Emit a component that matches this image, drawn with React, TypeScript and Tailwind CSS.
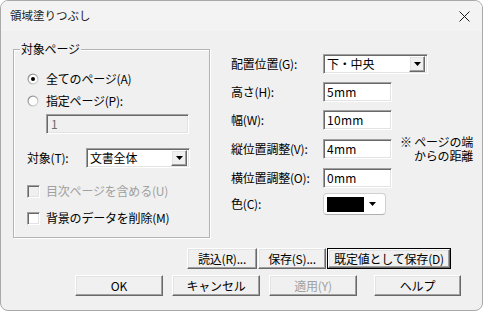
import clsx from "clsx"

const jp = "font-['Noto_Sans_CJK_JP','Noto_Sans_CJK_SC',sans-serif]"
const sunken =
  "border border-t-[#a0a0a0] border-l-[#a0a0a0] border-b-white border-r-white shadow-[inset_1px_1px_0_#696969,inset_-1px_-1px_0_#e3e3e3]"
const raised =
  "border border-t-white border-l-white border-b-[#696969] border-r-[#696969] shadow-[inset_-1px_-1px_0_#a0a0a0,inset_1px_1px_0_#e3e3e3] bg-[#f0f0f0]"

function Radio({ checked }: { checked?: boolean }) {
  return (
    <svg width="12" height="12" viewBox="0 0 12 12" className="shrink-0">
      <defs>
        <linearGradient id="rimGrad" x1="0" y1="0" x2="1" y2="1">
          <stop offset="0" stopColor="#7a7a7a" />
          <stop offset="1" stopColor="#e6e6e6" />
        </linearGradient>
      </defs>
      <circle cx="6" cy="6" r="5.5" fill="url(#rimGrad)" />
      <circle cx="6" cy="6" r="4.3" fill="#fff" />
      {checked && <circle cx="6" cy="6" r="2" fill="#000" />}
    </svg>
  )
}

function Check({ disabled }: { disabled?: boolean }) {
  return <div className={clsx("w-[13px] h-[13px] shrink-0", sunken, disabled ? "bg-[#f0f0f0]" : "bg-white")} />
}

function Arrow() {
  return (
    <svg width="7" height="4" viewBox="0 0 7 4">
      <path d="M0 0h7L3.5 4z" fill="#000" />
    </svg>
  )
}

function Combo({ value, w }: { value: string; w: string }) {
  return (
    <div className={clsx("h-[20px] flex items-center bg-white p-[2px]", sunken, w)}>
      <span className="flex-1 pl-[1px] leading-none">{value}</span>
      <div className={clsx("w-[16px] h-[16px] flex items-center justify-center", raised)}>
        <Arrow />
      </div>
    </div>
  )
}

function Field({ value }: { value: string }) {
  return (
    <div className={clsx("w-[69px] h-[20px] bg-white flex items-center pl-[3px] tracking-[0.3px]", sunken)}>
      {value}
    </div>
  )
}

function Btn({
  label,
  w,
  disabled,
  isDefault,
}: {
  label: string
  w: string
  disabled?: boolean
  isDefault?: boolean
}) {
  return (
    <div className={clsx(w, isDefault ? "border border-black" : "")}>
      <div
        className={clsx(
          "flex items-center justify-center",
          isDefault ? "h-[19px]" : "h-[21px]",
          raised,
          disabled && "text-[#a0a0a0]",
        )}>
        {label}
      </div>
    </div>
  )
}

function Row({ label, children }: { label: string; children: React.ReactNode }) {
  return (
    <div className="flex items-center">
      <span className="w-[92px]">{label}</span>
      {children}
    </div>
  )
}

export default function App() {
  return (
    <div className={clsx("w-[483px] h-[311px] bg-white text-[12px] text-black tracking-[-0.2px]", jp)}>
      <div className="w-full h-full rounded-[8px] border border-[#a9a9a9] bg-[#f0f0f0] overflow-hidden flex flex-col">
        {/* title bar */}
        <div className="h-[30px] shrink-0 bg-[#f3f3f3] flex items-center justify-between pl-[9px] pr-[12px]">
          <span className="text-[11.5px] text-[#1a1a1a] tracking-normal">領域塗りつぶし</span>
          <svg width="11" height="11" viewBox="0 0 11 11">
            <path d="M0.5 0.5l10 10M10.5 0.5l-10 10" stroke="#1a1a1a" strokeWidth="1" />
          </svg>
        </div>

        <div className="flex flex-col">
          <div className="flex">
            {/* group box */}
            <div className="relative ml-[12px] mt-[18px] w-[197px] h-[189px] border border-[#b4b4b4] shadow-[inset_1px_1px_0_#fff,1px_1px_0_#fff]">
              <span className="absolute -top-[9px] left-[6px] px-[1px] bg-[#f0f0f0] leading-[16px]">対象ページ</span>
              <div className="flex flex-col pl-[13px] pt-[22px]">
                <div className="flex items-center gap-[7px] h-[14px]">
                  <Radio checked />
                  <span>全てのページ(A)</span>
                </div>
                <div className="flex items-center gap-[7px] h-[14px] mt-[8px]">
                  <Radio />
                  <span>指定ページ(P):</span>
                </div>
                <div className={clsx("ml-[19px] mt-[6px] w-[143px] h-[20px] flex items-center pl-[4px] text-[#6d6d6d]", sunken)}>
                  1
                </div>
                <div className="flex items-center mt-[14px]">
                  <span className="w-[59px]">対象(T):</span>
                  <Combo value="文書全体" w="w-[104px]" />
                </div>
                <div className="flex items-center gap-[6px] mt-[14px] text-[#a0a0a0]">
                  <Check disabled />
                  <span>目次ページを含める(U)</span>
                </div>
                <div className="flex items-center gap-[6px] mt-[9px]">
                  <Check />
                  <span>背景のデータを削除(M)</span>
                </div>
              </div>
            </div>

            {/* right column */}
            <div className="ml-[21px] mt-[23px] flex flex-col">
              <Row label="配置位置(G):">
                <Combo value="下・中央" w="w-[105px]" />
              </Row>
              <div className="mt-[8px]">
                <Row label="高さ(H):">
                  <Field value="5mm" />
                </Row>
              </div>
              <div className="mt-[8px]">
                <Row label="幅(W):">
                  <Field value="10mm" />
                </Row>
              </div>
              <div className="mt-[9px]">
                <Row label="縦位置調整(V):">
                  <Field value="4mm" />
                  <div className="self-start h-[20px] -mt-[4px] ml-[5px] w-[76px] flex flex-col items-end whitespace-nowrap">
                    <span className="leading-[14px]">※ ページの端</span>
                    <span className="leading-[14px]">からの距離</span>
                  </div>
                </Row>
              </div>
              <div className="mt-[9px]">
                <Row label="横位置調整(O):">
                  <Field value="0mm" />
                </Row>
              </div>
              <div className="mt-[5px]">
                <Row label="色(C):">
                  <div className="w-[63px] h-[22px] rounded-[4px] border border-[#d0d0d0] border-b-[#b0b0b0] bg-white flex items-center pl-[3px] gap-[5px]">
                    <div className="w-[37px] h-[15px] bg-black" />
                    <Arrow />
                  </div>
                </Row>
              </div>
            </div>
          </div>

          {/* button rows */}
          <div className="flex gap-[1px] pl-[186px] mt-[10px]">
            <Btn label="読込(R)..." w="w-[70px]" />
            <Btn label="保存(S)..." w="w-[68px]" />
            <Btn label="既定値として保存(D)" w="w-[124px]" isDefault />
          </div>
          <div className="flex pl-[74px] mt-[6px]">
            <Btn label="OK" w="w-[88px]" />
            <div className="ml-[9px]">
              <Btn label="キャンセル" w="w-[88px]" />
            </div>
            <div className="ml-[9px]">
              <Btn label="適用(Y)" w="w-[88px]" disabled />
            </div>
            <div className="ml-[17px]">
              <Btn label="ヘルプ" w="w-[87px]" />
            </div>
          </div>
        </div>
      </div>
    </div>
  )
}
